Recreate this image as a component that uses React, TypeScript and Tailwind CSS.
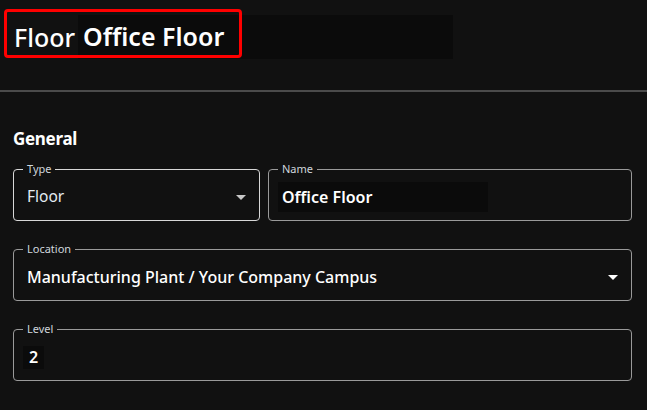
import { ReactNode } from "react";

function Caret({ className }: { className: string }) {
  return (
    <svg width="10" height="5" viewBox="0 0 10 5" className={className}>
      <path d="M0 0h10L5 5z" fill="currentColor" />
    </svg>
  );
}

function Field({
  label,
  className,
  border,
  children,
}: {
  label: string;
  className?: string;
  border: string;
  children: ReactNode;
}) {
  return (
    <fieldset className={`h-[58px] rounded-[4px] border ${border} pl-[9px] pr-3 ${className ?? ""}`}>
      <legend className="px-[4px] text-[11px] leading-[12px] text-[#cfd6dc]">{label}</legend>
      <div className="flex h-[44px] items-center">{children}</div>
    </fieldset>
  );
}

export default function App() {
  return (
    <div className="h-[410px] w-[647px] overflow-hidden bg-[#111111] font-['Noto_Sans',sans-serif] text-white">
      {/* Title */}
      <div className="relative h-[90px]">
        <div className="flex items-center pt-[15px] pl-[14px]">
          <span className="text-[25px] leading-[44px] font-medium">Floor</span>
          <span className="ml-[3px] flex h-[44px] w-[375px] items-center bg-[#0b0b0b] pl-[5px] text-[25px] font-semibold">
            Office Floor
          </span>
        </div>
        <div className="absolute top-[9px] left-[4px] h-[49px] w-[238px] rounded-[4px] border-[3px] border-[#ff0000]" />
      </div>
      <div className="h-[2px] w-full bg-[#4b4b4b]" />

      <div className="pr-[15px] pl-[13px] pt-[36px]">
        <h2 className="text-[17px] leading-[22px] font-bold tracking-[-0.3px]">General</h2>

        <div className="mt-[13px] flex gap-[8px]">
          <Field label="Type" border="border-[#d8d8d8]" className="w-[247px]">
            <span className="flex-1 pl-[4px] text-[15.5px] text-[#e4ecf2]">Floor</span>
            <Caret className="mr-[1px] text-[#c8c8c8]" />
          </Field>
          <Field label="Name" border="border-[#9a9a9a]" className="flex-1">
            <span className="flex h-[30px] w-[210px] items-center bg-[#0b0b0b] pl-[4px] text-[16px] font-semibold">
              Office Floor
            </span>
          </Field>
        </div>

        <Field label="Location" border="border-[#9a9a9a]" className="mt-[22px]">
          <span className="flex-1 pl-[4px] text-[16px] font-medium">
            Manufacturing Plant / Your Company Campus
          </span>
          <Caret className="mr-[1px] text-white" />
        </Field>

        <Field label="Level" border="border-[#9a9a9a]" className="mt-[22px]">
          <span className="flex h-[23px] w-[21px] items-center justify-center bg-[#0b0b0b] text-[16px] font-semibold">
            2
          </span>
        </Field>
      </div>
    </div>
  );
}
